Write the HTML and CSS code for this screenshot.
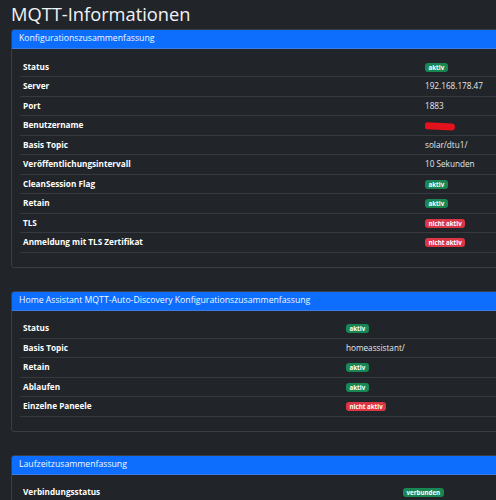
FILE: index.html
```html
<!DOCTYPE html>
<html lang="de">
<head>
<meta charset="UTF-8">
<meta name="viewport" content="width=device-width, initial-scale=1.0">
<title>MQTT-Informationen</title>
<link rel="stylesheet" href="styles.css">
</head>
<body>

<div class="page">
  <h1>MQTT-Informationen</h1>

  <div class="card">
    <div class="card-header">Konfigurationszusammenfassung</div>
    <div class="card-body">
      <table class="info-table cfg">
        <tr><th>Status</th><td><span class="badge ok">aktiv</span></td></tr>
        <tr><th>Server</th><td>192.168.178.47</td></tr>
        <tr><th>Port</th><td>1883</td></tr>
        <tr><th>Benutzername</th><td><span class="redacted"></span></td></tr>
        <tr><th>Basis Topic</th><td>solar/dtu1/</td></tr>
        <tr><th>Veröffentlichungsintervall</th><td>10 Sekunden</td></tr>
        <tr><th>CleanSession Flag</th><td><span class="badge ok">aktiv</span></td></tr>
        <tr><th>Retain</th><td><span class="badge ok">aktiv</span></td></tr>
        <tr><th>TLS</th><td><span class="badge off">nicht aktiv</span></td></tr>
        <tr><th>Anmeldung mit TLS Zertifikat</th><td><span class="badge off">nicht aktiv</span></td></tr>
      </table>
    </div>
  </div>

  <div class="card">
    <div class="card-header">Home Assistant MQTT-Auto-Discovery Konfigurationszusammenfassung</div>
    <div class="card-body">
      <table class="info-table hass">
        <tr><th>Status</th><td><span class="badge ok">aktiv</span></td></tr>
        <tr><th>Basis Topic</th><td>homeassistant/</td></tr>
        <tr><th>Retain</th><td><span class="badge ok">aktiv</span></td></tr>
        <tr><th>Ablaufen</th><td><span class="badge ok">aktiv</span></td></tr>
        <tr><th>Einzelne Paneele</th><td><span class="badge off">nicht aktiv</span></td></tr>
      </table>
    </div>
  </div>

  <div class="card">
    <div class="card-header">Laufzeitzusammenfassung</div>
    <div class="card-body">
      <table class="info-table runtime">
        <tr><th>Verbindungsstatus</th><td><span class="badge ok">verbunden</span></td></tr>
      </table>
    </div>
  </div>
</div>

</body>
</html>
```

FILE: styles.css
```css
* {
  box-sizing: border-box;
}
body {
  margin: 0;
  background: #212529;
  color: #dee2e6;
  font-family: "Open Sans", "Noto Sans", sans-serif;
  overflow: hidden;
}
.page {
  width: 640px;
  padding: 0 0 0 11px;
}

h1 {
  margin: 0;
  padding-top: 2px;
  height: 29px;
  font-size: 18.3px;
  font-weight: 400;
  line-height: 24px;
  color: #f1f3f5;
}

.card {
  border: 1px solid #3a3e43;
  border-radius: 3px;
  margin-bottom: 23px;
  overflow: hidden;
}
.card-header {
  background: #0d6efd;
  color: #f4f8ff;
  font-size: 8.7px;
  height: 20px;
  line-height: 19px;
  padding: 0 8px;
  margin: -1px -1px 0 -1px;
  border-bottom: 1px solid #3d7de8;
}
.card-body {
  padding: 8px 8px 14px 8px;
}

/* key / value tables */
.info-table {
  width: 100%;
  border-collapse: collapse;
}
.info-table th,
.info-table td {
  height: 19.5px;
  padding: 0 3px;
  text-align: left;
  vertical-align: middle;
  border-bottom: 1px solid #373b3f;
  font-size: 8.2px;
  line-height: 10px;
}
.info-table th {
  font-weight: 700;
  color: #fff;
}
.info-table td {
  color: #e4e7ea;
}
.cfg th { width: 402px; }
.hass th { width: 323px; }
.runtime th { width: 380px; }

.badge {
  display: inline-block;
  font-size: 6.2px;
  font-weight: 700;
  color: #fff;
  line-height: 9px;
  padding: 0 3.5px;
  border-radius: 3px;
  vertical-align: middle;
}
.badge.ok { background: #198754; }
.badge.off { background: #dc3545; }

/* blacked-out (red) user name */
.redacted {
  display: inline-block;
  width: 30px;
  height: 7px;
  margin-top: 2px;
  background: #e3121c;
  border-radius: 3px 5px 5px 4px;
  transform: rotate(3deg);
  vertical-align: middle;
}
```
